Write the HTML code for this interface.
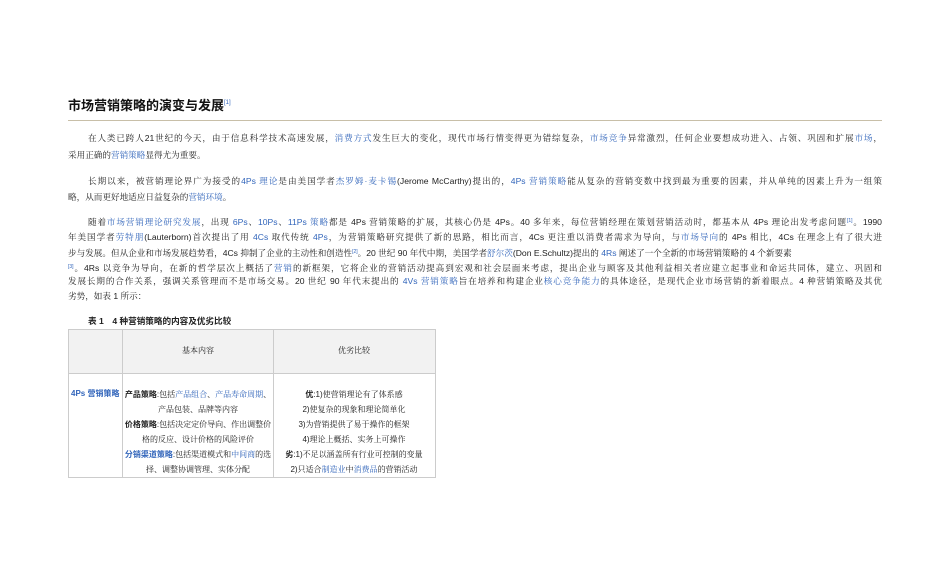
<!DOCTYPE html>
<html><head><meta charset="utf-8"><style>
body{margin:0;width:950px;height:577px;background:#fff;position:relative;overflow:hidden;font-family:"Liberation Sans","Noto Serif CJK SC",serif;color:#222;}
.l{position:absolute;left:68px;width:814px;font-size:8.6px;line-height:12px;white-space:nowrap;text-align:justify;text-align-last:justify;}
.l.n{text-align-last:left;}
a{color:#3366bb;text-decoration:none}
sup{font-size:5px;vertical-align:3px;color:#3366bb}
.t{position:absolute;font-size:8px;line-height:12px;white-space:nowrap}
b{font-family:"Liberation Sans","Noto Sans CJK SC",sans-serif;}
</style></head><body>
<div style="position:absolute;left:68px;top:95px;font-size:13px;font-weight:bold;font-family:'Liberation Sans','Noto Sans CJK SC',sans-serif;color:#111">市场营销策略的演变与发展<sup style="font-size:6px;vertical-align:6px;font-weight:normal">[1]</sup></div>
<div style="position:absolute;left:68px;top:120px;width:814px;height:1px;background:#c8bfa8"></div>

<div class="l" style="top:132px;padding-left:20px;width:794px">在人类已跨人21世纪的今天，由于信息科学技术高速发展，<a>消费方式</a>发生巨大的变化，现代市场行情变得更为错综复杂，<a>市场竞争</a>异常激烈，任何企业要想成功进入、占领、巩固和扩展<a>市场</a>，</div>
<div class="l n" style="top:149px">采用正确的<a>营销策略</a>显得尤为重要。</div>

<div class="l" style="top:175px;padding-left:20px;width:794px">长期以来，被营销理论界广为接受的<a>4Ps 理论</a>是由美国学者<a>杰罗姆·麦卡锡</a>(Jerome McCarthy)提出的，<a>4Ps 营销策略</a>能从复杂的营销变数中找到最为重要的因素，并从单纯的因素上升为一组策</div>
<div class="l n" style="top:191px">略，从而更好地适应日益复杂的<a>营销环境</a>。</div>

<div class="l" style="top:215px;padding-left:20px;width:794px">随着<a>市场营销理论研究发展</a>，出现 <a>6Ps</a>、<a>10Ps</a>、<a>11Ps 策略</a>都是 4Ps 营销策略的扩展，其核心仍是 4Ps。40 多年来，每位营销经理在策划营销活动时，都基本从 4Ps 理论出发考虑问题<sup>[1]</sup>。1990</div>
<div class="l" style="top:231px">年美国学者<a>劳特朋</a>(Lauterborn)首次提出了用 <a>4Cs</a> 取代传统 <a>4Ps</a>，为营销策略研究提供了新的思路，相比而言，4Cs 更注重以消费者需求为导向，与<a>市场导向</a>的 4Ps 相比，4Cs 在理念上有了很大进</div>
<div class="l n" style="top:246px;width:790px">步与发展。但从企业和市场发展趋势看，4Cs 抑制了企业的主动性和创造性<sup>[2]</sup>。20 世纪 90 年代中期，美国学者<a>舒尔茨</a>(Don E.Schultz)提出的 <a>4Rs</a> 阐述了一个全新的市场营销策略的 4 个新要素</div>
<div class="l" style="top:261px"><sup>[3]</sup>。4Rs 以竞争为导向，在新的哲学层次上概括了<a>营销</a>的新框架，它将企业的营销活动提高到宏观和社会层面来考虑，提出企业与顾客及其他利益相关者应建立起事业和命运共同体，建立、巩固和</div>
<div class="l" style="top:275px">发展长期的合作关系，强调关系管理而不是市场交易。20 世纪 90 年代末提出的 <a>4Vs 营销策略</a>旨在培养和构建企业<a>核心竞争能力</a>的具体途径，是现代企业市场营销的新着眼点。4 种营销策略及其优</div>
<div class="l n" style="top:290px">劣势，如表 1 所示：</div>

<div style="position:absolute;left:88px;top:315px;font-size:8.6px;font-weight:bold;font-family:'Liberation Sans','Noto Sans CJK SC',sans-serif">表 1　4 种营销策略的内容及优劣比较</div>

<div style="position:absolute;left:68px;top:329px;width:366px;height:43px;background:#f2f2f2;border:1px solid #ccc"></div>
<div style="position:absolute;left:68px;top:372px;width:366px;height:105px;border:1px solid #ccc;border-top:none"></div>
<div style="position:absolute;left:122px;top:330px;width:1px;height:148px;background:#ccc"></div>
<div style="position:absolute;left:273px;top:330px;width:1px;height:148px;background:#ccc"></div>
<div class="t" style="left:123px;width:150px;text-align:center;top:345px">基本内容</div>
<div class="t" style="left:274px;width:160px;text-align:center;top:345px">优劣比较</div>
<div class="t" style="left:71px;top:388px;color:#3366bb"><b>4Ps 营销策略</b></div>
<div class="t" style="left:123px;width:150px;text-align:center;top:387px;line-height:15px"><b>产品策略</b>:包括<a>产品组合</a>、<a>产品寿命周期</a>、<br>产品包装、品牌等内容<br><b>价格策略</b>:包括决定定价导向、作出调整价<br>格的反应、设计价格的风险评价<br><a><b>分销渠道策略</b></a>:包括渠道模式和<a>中间商</a>的选<br>择、调整协调管理、实体分配</div>
<div class="t" style="left:274px;width:160px;text-align:center;top:387px;line-height:15px"><b>优</b>:1)使营销理论有了体系感<br>2)使复杂的现象和理论简单化<br>3)为营销提供了易于操作的框架<br>4)理论上概括、实务上可操作<br><b>劣</b>:1)不足以涵盖所有行业可控制的变量<br>2)只适合<a>制造业</a>中<a>消费品</a>的营销活动</div>
</body></html>
